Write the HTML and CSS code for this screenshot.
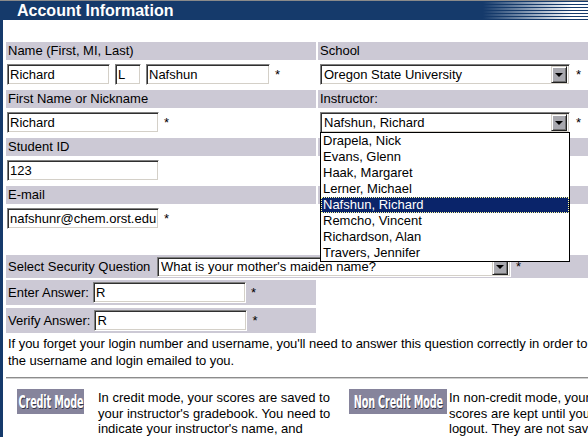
FILE: index.html
```html
<!DOCTYPE html>
<html>
<head>
<meta charset="utf-8">
<title>Account Information</title>
<link rel="stylesheet" href="styles.css">
</head>
<body>
<div class="page">
  <div class="header">
    <div class="title">Account Information</div>
    <div class="fade"></div>
  </div>
  <div class="content">
    <div class="grid">
      <div class="band">Name (First, MI, Last)</div>
      <div class="band">School</div>
      <div class="fields">
        <input class="in w-first" value="Richard">
        <input class="in w-mi" value="L">
        <input class="in w-last" value="Nafshun">
        <span class="star">*</span>
      </div>
      <div class="fields">
        <div class="sel w-school"><span class="sel-text">Oregon State University</span><span class="arrow"></span></div>
        <span class="star star-r">*</span>
      </div>

      <div class="band">First Name or Nickname</div>
      <div class="band">Instructor:</div>
      <div class="fields">
        <input class="in w-wide" value="Richard">
        <span class="star star-w">*</span>
      </div>
      <div class="fields">
        <div class="sel w-school dropwrap"><span class="sel-text">Nafshun, Richard</span><span class="arrow"></span>
          <ul class="droplist">
            <li>Drapela, Nick</li>
            <li>Evans, Glenn</li>
            <li>Haak, Margaret</li>
            <li>Lerner, Michael</li>
            <li class="active">Nafshun, Richard</li>
            <li>Remcho, Vincent</li>
            <li>Richardson, Alan</li>
            <li>Travers, Jennifer</li>
          </ul>
        </div>
        <span class="star star-r">*</span>
      </div>

      <div class="band">Student ID</div>
      <div class="band"></div>
      <div class="fields">
        <input class="in w-wide" value="123">
      </div>
      <div class="fields"></div>

      <div class="band">E-mail</div>
      <div class="band"></div>
      <div class="fields last">
        <input class="in w-wide" value="nafshunr@chem.orst.edu">
        <span class="star star-w">*</span>
      </div>
      <div class="fields last"></div>
    </div>

    <div class="secrow">
      <span class="lbl">Select Security Question</span>
      <div class="sel w-sec"><span class="sel-text">What is your mother's maiden name?</span><span class="arrow"></span></div>
      <span class="star star-s">*</span>
    </div>
    <div class="ansrow">
      <span class="lbl">Enter Answer:</span>
      <input class="in w-ans" value="R">
      <span class="star star-w">*</span>
    </div>
    <div class="ansrow verify">
      <span class="lbl">Verify Answer:</span>
      <input class="in w-ans" value="R">
      <span class="star star-w">*</span>
    </div>

    <p class="note">If you forget your login number and username, you'll need to answer this question correctly in order to<br>the username and login emailed to you.</p>

    <div class="rule"></div>

    <div class="modes">
      <div class="mode credit">
        <div class="mode-btn b-credit"><span class="btn-text">Credit Mode</span></div>
        <p class="mode-text">In credit mode, your scores are saved to<br>your instructor's gradebook. You need to<br>indicate your instructor's name, and</p>
      </div>
      <div class="mode noncredit">
        <div class="mode-btn b-noncredit"><span class="btn-text">Non Credit Mode</span></div>
        <p class="mode-text">In non-credit mode, your<br>scores are kept until you<br>logout. They are not saved</p>
      </div>
    </div>
  </div>
</div>
</body>
</html>
```
FILE: styles.css
```css
html, body {
  margin: 0;
  padding: 0;
  background: #fff;
  overflow: hidden;
}
body {
  font-family: "Liberation Sans", Arial, sans-serif;
  font-size: 13px;
  color: #000;
}
.page {
  width: 588px;
  height: 437px;
  overflow: hidden;
}
.header {
  display: flex;
  height: 20px;
  border-top: 1px solid #8a8a8a;
  box-sizing: border-box;
}
.title {
  flex: 1;
  background: #153a6b;
  color: #fff;
  font-weight: bold;
  font-size: 16px;
  line-height: 20px;
  padding-left: 17px;
  white-space: nowrap;
}
.fade {
  width: 105px;
  background:
    linear-gradient(to right, #153a6b 0%, rgba(21,58,107,0.6) 35%, rgba(21,58,107,0) 85%),
    repeating-linear-gradient(to bottom, #153a6b 0 1px, #ffffff 1px 3px);
}
.content {
  border-left: 3px solid #153a6b;
  padding-left: 3px;
  padding-top: 22px;
  height: 437px;
  box-sizing: border-box;
}
.grid {
  display: grid;
  grid-template-columns: 310px 270px;
  column-gap: 2px;
  grid-auto-rows: auto;
}
.band {
  background: #ccc9d5;
  height: 18px;
  line-height: 18px;
  padding-left: 2px;
  white-space: nowrap;
}
.fields {
  height: 30px;
  box-sizing: border-box;
  padding-top: 4px;
  display: flex;
  align-items: flex-start;
}
.fields.last {
  height: 51px;
}
.in {
  height: 21px;
  box-sizing: border-box;
  margin: 0;
  font-family: "Liberation Sans", Arial, sans-serif;
  font-size: 13px;
  color: #000;
  padding: 0 2px;
  background: #fff;
  border: 1px solid;
  border-color: #808080 #ffffff #ffffff #808080;
  box-shadow: inset 1px 1px 0 #303030, inset -1px -1px 0 #d4d0c8;
  outline: none;
}
.w-first { width: 103px; margin-left: 1px; }
.w-mi { width: 26px; margin-left: 5px; }
.w-last { width: 124px; margin-left: 5px; }
.w-wide { width: 152px; margin-left: 1px; }
.w-ans { width: 153px; }
.star {
  margin-left: 5px;
  line-height: 21px;
}
.star-w { margin-left: 5px; }
.star-r { margin-left: 6px; }
.star-s { margin-left: 5px; }

.sel {
  display: flex;
  align-items: center;
  height: 21px;
  box-sizing: border-box;
  background: #fff;
  border: 1px solid;
  border-color: #808080 #ffffff #ffffff #808080;
  box-shadow: inset 1px 1px 0 #303030, inset -1px -1px 0 #d4d0c8;
  padding: 2px 2px 2px 3px;
  position: relative;
}
.sel-text {
  flex: 1;
  white-space: nowrap;
  overflow: hidden;
  line-height: 17px;
}
.arrow {
  width: 16px;
  height: 17px;
  box-sizing: border-box;
  background: #a8a8ae;
  border: 1px solid;
  border-color: #d4d0c8 #202020 #202020 #d4d0c8;
  box-shadow: inset 1px 1px 0 #ffffff, inset -1px -1px 0 #707070;
  display: flex;
  align-items: center;
  justify-content: center;
}
.arrow::before {
  content: "";
  width: 0;
  height: 0;
  border-left: 4px solid transparent;
  border-right: 4px solid transparent;
  border-top: 4px solid #000;
}
.w-school { width: 250px; margin-left: 2px; }

.droplist {
  position: absolute;
  left: -1px;
  top: 100%;
  width: 250px;
  box-sizing: border-box;
  margin: 0;
  padding: 0;
  list-style: none;
  background: #fff;
  border: 1px solid #000;
  z-index: 10;
}
.droplist li {
  height: 16px;
  line-height: 16px;
  padding-left: 2px;
  white-space: nowrap;
}
.droplist li.active {
  background: #0a246a;
  color: #fff;
  outline: 1px dotted #ffffa0;
  outline-offset: -1px;
}

.secrow {
  margin-top: 0;
  height: 23px;
  background: #ccc9d5;
  display: flex;
  align-items: center;
  padding-left: 2px;
}
.secrow .lbl { width: 149px; white-space: nowrap; }
.w-sec { width: 354px; height: 20px; padding-top: 1px; padding-bottom: 1px; }
.w-sec .arrow { height: 16px; }

.ansrow {
  width: 310px;
  box-sizing: border-box;
  margin-top: 2px;
  height: 25px;
  background: #ccc9d5;
  display: flex;
  align-items: center;
  padding-left: 2px;
}
.ansrow .lbl { white-space: nowrap; margin-right: 4px; }
.ansrow.verify { margin-top: 3px; }

.note {
  margin: 2px 0 0 2px;
  line-height: 17px;
  white-space: nowrap;
  letter-spacing: -0.04px;
}
.rule {
  margin-top: 8px;
  height: 0;
  border-top: 1px solid #8c8c8c;
  border-bottom: 1px solid #d0d0d0;
}
.modes {
  display: flex;
  margin-top: 10px;
  padding-left: 11px;
}
.mode {
  display: flex;
  align-items: flex-start;
  flex: none;
}
.mode.credit { width: 332px; }
.mode.credit .mode-text { margin-left: 14px; }
.mode.noncredit .mode-text { margin-left: 2px; }
.mode-btn {
  height: 25px;
  background: #86849c;
  display: flex;
  align-items: center;
  justify-content: center;
  overflow: hidden;
  flex: none;
}
.b-credit { width: 67px; }
.b-noncredit { width: 98px; }
.btn-text {
  display: inline-block;
  font-family: "DejaVu Sans Condensed", "DejaVu Sans", sans-serif;
  font-weight: bold;
  font-size: 18px;
  color: #fff;
  text-shadow: 1px 1px 0 #333344;
  transform: scaleX(0.6);
  white-space: nowrap;
  letter-spacing: -0.3px;
}
.mode-text {
  margin: 1px 0 0 0;
  line-height: 15.5px;
  white-space: nowrap;
}
```
